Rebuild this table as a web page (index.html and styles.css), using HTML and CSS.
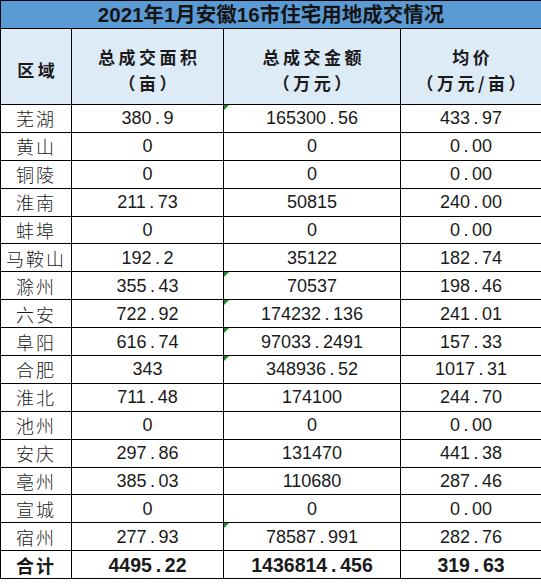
FILE: index.html
```html
<!DOCTYPE html>
<html lang="zh-CN">
<head>
<meta charset="utf-8">
<title>2021年1月安徽16市住宅用地成交情况</title>
<link rel="stylesheet" href="styles.css">
</head>
<body>
<table class="sheet">
  <colgroup>
    <col class="c1"><col class="c2"><col class="c3"><col class="c4">
  </colgroup>
  <thead>
    <tr class="title"><th colspan="4">2021年1月安徽16市住宅用地成交情况</th></tr>
    <tr class="head">
      <th>区域</th>
      <th>总成交面积<br>（亩）</th>
      <th>总成交金额<br>（万元）</th>
      <th>均价<br>（万元/亩）</th>
    </tr>
  </thead>
  <tbody>
    <tr><td class="city">芜湖</td><td class="num">380<span class="pt">.</span>9</td><td class="num flag">165300<span class="pt">.</span>56</td><td class="num">433<span class="pt">.</span>97</td></tr>
    <tr><td class="city">黄山</td><td class="num">0</td><td class="num">0</td><td class="num">0<span class="pt">.</span>00</td></tr>
    <tr><td class="city">铜陵</td><td class="num">0</td><td class="num">0</td><td class="num">0<span class="pt">.</span>00</td></tr>
    <tr><td class="city">淮南</td><td class="num">211<span class="pt">.</span>73</td><td class="num">50815</td><td class="num">240<span class="pt">.</span>00</td></tr>
    <tr><td class="city">蚌埠</td><td class="num">0</td><td class="num">0</td><td class="num">0<span class="pt">.</span>00</td></tr>
    <tr><td class="city">马鞍山</td><td class="num">192<span class="pt">.</span>2</td><td class="num">35122</td><td class="num">182<span class="pt">.</span>74</td></tr>
    <tr><td class="city">滁州</td><td class="num">355<span class="pt">.</span>43</td><td class="num flag">70537</td><td class="num">198<span class="pt">.</span>46</td></tr>
    <tr><td class="city">六安</td><td class="num">722<span class="pt">.</span>92</td><td class="num flag">174232<span class="pt">.</span>136</td><td class="num">241<span class="pt">.</span>01</td></tr>
    <tr><td class="city">阜阳</td><td class="num">616<span class="pt">.</span>74</td><td class="num flag">97033<span class="pt">.</span>2491</td><td class="num">157<span class="pt">.</span>33</td></tr>
    <tr><td class="city">合肥</td><td class="num">343</td><td class="num flag">348936<span class="pt">.</span>52</td><td class="num">1017<span class="pt">.</span>31</td></tr>
    <tr><td class="city">淮北</td><td class="num">711<span class="pt">.</span>48</td><td class="num">174100</td><td class="num">244<span class="pt">.</span>70</td></tr>
    <tr><td class="city">池州</td><td class="num">0</td><td class="num">0</td><td class="num">0<span class="pt">.</span>00</td></tr>
    <tr><td class="city">安庆</td><td class="num">297<span class="pt">.</span>86</td><td class="num">131470</td><td class="num">441<span class="pt">.</span>38</td></tr>
    <tr><td class="city">亳州</td><td class="num">385<span class="pt">.</span>03</td><td class="num">110680</td><td class="num">287<span class="pt">.</span>46</td></tr>
    <tr><td class="city">宣城</td><td class="num">0</td><td class="num">0</td><td class="num">0<span class="pt">.</span>00</td></tr>
    <tr><td class="city">宿州</td><td class="num">277<span class="pt">.</span>93</td><td class="num flag">78587<span class="pt">.</span>991</td><td class="num">282<span class="pt">.</span>76</td></tr>
    <tr class="total"><td class="city">合计</td><td class="num">4495<span class="pt">.</span>22</td><td class="num">1436814<span class="pt">.</span>456</td><td class="num">319<span class="pt">.</span>63</td></tr>
  </tbody>
</table>
</body>
</html>
```
FILE: styles.css
```css
html, body {
  margin: 0;
  padding: 0;
  background: #ffffff;
}

.sheet {
  border-collapse: collapse;
  table-layout: fixed;
  width: 541px;
  color: #1a1a1a;
}

.c1 { width: 71px; }
.c2 { width: 152px; }
.c3 { width: 177px; }
.c4 { width: 141px; }

.sheet th,
.sheet td {
  border: 1px solid #000000;
  padding: 0;
  text-align: center;
  vertical-align: middle;
  white-space: nowrap;
}

.title th {
  height: 27px;
  background: #5b9bd5;
  font: 700 20.5px/27px "Liberation Sans", "Noto Sans CJK SC", sans-serif;
  color: #141414;
}

.head th {
  height: 69px;
  padding-top: 6px;
  padding-left: 3.5px;
  background: #ddebf7;
  font: 700 17px/25.5px "Noto Sans CJK SC", sans-serif;
  letter-spacing: 3.5px;
}

.sheet tbody td {
  height: 26.9px;
}

.city {
  font: 300 18px/26px "Noto Sans CJK SC", sans-serif;
  letter-spacing: 2px;
  padding-left: 2px;
}

.num {
  font: 400 18px/26px "Liberation Sans", sans-serif;
}

.pt {
  display: inline-block;
  width: 12px;
  text-align: center;
}

.total .city {
  font-weight: 700;
}

.total .num {
  font-weight: 700;
  font-size: 19.5px;
}

.total .pt {
  width: 13px;
}

.flag {
  position: relative;
}

.flag::before {
  content: "";
  position: absolute;
  left: 0;
  top: 0;
  border-top: 5px solid #1e8c1e;
  border-right: 5px solid transparent;
}
```
